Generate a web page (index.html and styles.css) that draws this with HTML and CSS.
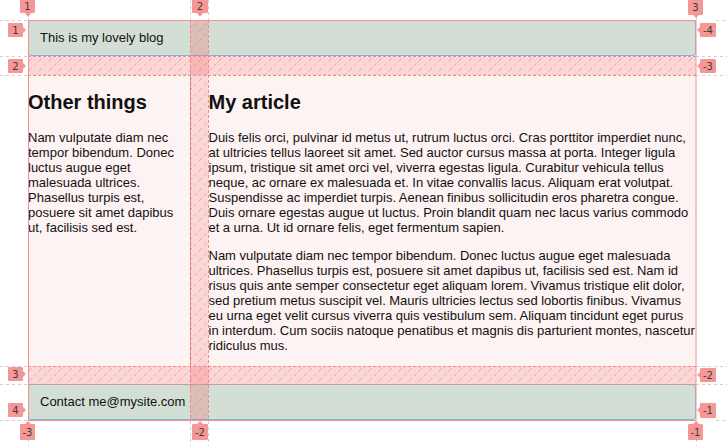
FILE: index.html
```html
<!DOCTYPE html>
<html lang="en">
<head>
<meta charset="utf-8">
<title>Grid layout</title>
<link rel="stylesheet" href="styles.css">
</head>
<body>
<div class="stage">
  <div class="wrapper">
    <header class="site-header">This is my lovely blog</header>
    <aside class="sidebar">
      <h2>Other things</h2>
      <p>Nam vulputate diam nec tempor bibendum. Donec luctus augue eget malesuada ultrices. Phasellus turpis est, posuere sit amet dapibus ut, facilisis sed est.</p>
    </aside>
    <article class="content">
      <h2>My article</h2>
      <p>Duis felis orci, pulvinar id metus ut, rutrum luctus orci. Cras porttitor imperdiet nunc, at ultricies tellus laoreet sit amet. Sed auctor cursus massa at porta. Integer ligula ipsum, tristique sit amet orci vel, viverra egestas ligula. Curabitur vehicula tellus neque, ac ornare ex malesuada et. In vitae convallis lacus. Aliquam erat volutpat. Suspendisse ac imperdiet turpis. Aenean finibus sollicitudin eros pharetra congue. Duis ornare egestas augue ut luctus. Proin blandit quam nec lacus varius commodo et a urna. Ut id ornare felis, eget fermentum sapien.</p>
      <p>Nam vulputate diam nec tempor bibendum. Donec luctus augue eget malesuada ultrices. Phasellus turpis est, posuere sit amet dapibus ut, facilisis sed est. Nam id risus quis ante semper consectetur eget aliquam lorem. Vivamus tristique elit dolor, sed pretium metus suscipit vel. Mauris ultricies lectus sed lobortis finibus. Vivamus eu urna eget velit cursus viverra quis vestibulum sem. Aliquam tincidunt eget purus in interdum. Cum sociis natoque penatibus et magnis dis parturient montes, nascetur ridiculus mus.</p>
    </article>
    <footer class="site-footer">Contact me@mysite.com</footer>
  </div>
</div>

<svg class="grid-overlay" width="727" height="446" viewBox="0 0 727 446" xmlns="http://www.w3.org/2000/svg">
  <defs>
    <pattern id="hatch" patternUnits="userSpaceOnUse" width="10" height="10">
      <line x1="0" y1="10" x2="10" y2="0" stroke="#ee8a8a" stroke-width="1" stroke-dasharray="3 3" opacity="0.7"/>
    </pattern>
  </defs>

  <!-- extension lines -->
  <g stroke="#cfcfcf" stroke-width="1" stroke-dasharray="3 3" fill="none">
    <line x1="0" y1="20.5" x2="28" y2="20.5"/>
    <line x1="0" y1="56.5" x2="28" y2="56.5"/>
    <line x1="0" y1="75.5" x2="28" y2="75.5"/>
    <line x1="0" y1="366.5" x2="28" y2="366.5"/>
    <line x1="0" y1="384.5" x2="28" y2="384.5"/>
    <line x1="0" y1="420.5" x2="28" y2="420.5"/>
    <line x1="716" y1="20.5" x2="727" y2="20.5"/>
    <line x1="696" y1="56.5" x2="727" y2="56.5"/>
    <line x1="696" y1="75.5" x2="727" y2="75.5"/>
    <line x1="696" y1="366.5" x2="727" y2="366.5"/>
    <line x1="696" y1="384.5" x2="727" y2="384.5"/>
    <line x1="716" y1="420.5" x2="727" y2="420.5"/>
    <line x1="28.5" y1="0" x2="28.5" y2="20"/>
    <line x1="190.5" y1="0" x2="190.5" y2="20"/>
    <line x1="208.5" y1="0" x2="208.5" y2="20"/>
    <line x1="696.5" y1="0" x2="696.5" y2="20"/>
    <line x1="28.5" y1="421" x2="28.5" y2="446"/>
    <line x1="190.5" y1="421" x2="190.5" y2="446"/>
    <line x1="208.5" y1="421" x2="208.5" y2="446"/>
    <line x1="696.5" y1="421" x2="696.5" y2="446"/>
  </g>

  <!-- gaps -->
  <g fill="rgba(242,105,105,0.27)">
    <rect x="28" y="56.5" width="668" height="18.5"/>
    <rect x="28" y="366" width="668" height="18"/>
    <rect x="190.5" y="20" width="18" height="400.5"/>
  </g>
  <g fill="url(#hatch)">
    <rect x="28" y="56.5" width="668" height="18.5"/>
    <rect x="28" y="366" width="668" height="18"/>
    <rect x="190.5" y="20" width="18" height="400.5"/>
  </g>
  <g stroke="#f08c8c" stroke-width="1" stroke-dasharray="3 2" fill="none">
    <line x1="28" y1="56.5" x2="696" y2="56.5"/>
    <line x1="28" y1="75.5" x2="696" y2="75.5"/>
    <line x1="28" y1="366.5" x2="696" y2="366.5"/>
    <line x1="28" y1="384.5" x2="696" y2="384.5"/>
    <line x1="190.5" y1="20" x2="190.5" y2="420"/>
    <line x1="208.5" y1="20" x2="208.5" y2="420"/>
  </g>
  <rect x="28.5" y="20.5" width="667.5" height="400" fill="none" stroke="#f39191" stroke-width="1"/>

  <!-- badges -->
  <g fill="#f59797">
    <rect x="20" y="-3" width="15" height="16" rx="1"/>
    <polygon points="25,13 31,13 28,17"/>
    <rect x="192" y="-3" width="16" height="16" rx="1"/>
    <polygon points="197,13 203,13 200,17"/>
    <rect x="688" y="-1" width="15" height="16" rx="1"/>
    <polygon points="693,15 699,15 696,18"/>

    <rect x="8" y="23" width="15" height="14" rx="1"/>
    <polygon points="23,27 23,33 26,30"/>
    <rect x="8" y="59" width="15" height="14" rx="1"/>
    <polygon points="23,63 23,69 26,66"/>
    <rect x="8" y="367" width="15" height="14" rx="1"/>
    <polygon points="23,371 23,377 26,374"/>
    <rect x="8" y="403" width="15" height="14" rx="1"/>
    <polygon points="23,407 23,413 26,410"/>

    <rect x="700" y="23" width="16" height="14" rx="1"/>
    <polygon points="700,27 700,33 697,30"/>
    <rect x="700" y="59" width="16" height="14" rx="1"/>
    <polygon points="700,63 700,69 697,66"/>
    <rect x="700" y="368" width="16" height="14" rx="1"/>
    <polygon points="700,372 700,378 697,375"/>
    <rect x="700" y="403" width="16" height="15" rx="1"/>
    <polygon points="700,407 700,413 697,410"/>

    <rect x="20" y="424" width="15" height="16" rx="1"/>
    <polygon points="25,424 31,424 28,421"/>
    <rect x="192" y="424" width="16" height="16" rx="1"/>
    <polygon points="197,424 203,424 200,421"/>
    <rect x="688" y="424" width="15" height="16" rx="1"/>
    <polygon points="693,424 699,424 696,421"/>
  </g>
  <g class="badge-text" text-anchor="middle">
    <text x="27.5" y="10">1</text>
    <text x="200" y="10">2</text>
    <text x="695.5" y="11">3</text>
    <text x="15.5" y="34">1</text>
    <text x="15.5" y="70">2</text>
    <text x="15.5" y="378">3</text>
    <text x="15.5" y="414">4</text>
    <text x="708" y="34">-4</text>
    <text x="708" y="70">-3</text>
    <text x="708" y="379">-2</text>
    <text x="708" y="414">-1</text>
    <text x="27.5" y="436">-3</text>
    <text x="200" y="436">-2</text>
    <text x="695.5" y="436">-1</text>
  </g>
</svg>
</body>
</html>
```

FILE: styles.css
```css
html, body {
  margin: 0;
  padding: 0;
  background: #ffffff;
}

body {
  font-family: "Liberation Sans", Arial, sans-serif;
  font-size: 13px;
  color: #111;
  width: 727px;
  height: 446px;
  overflow: hidden;
  position: relative;
}

.stage {
  padding: 20px 0 0 28px;
}

.wrapper {
  width: 668px;
  display: grid;
  grid-template-columns: 1fr 3fr;
  grid-template-rows: auto auto auto;
  gap: 18px;
}

.site-header,
.site-footer {
  grid-column: 1 / -1;
  background: #d3dfd4;
  border: 1px solid #7cb6de;
  border-radius: 3px;
  padding: 10px 11px;
  line-height: 14px;
}

.sidebar {
  background: #fdf3f2;
  border-right: 1px solid #8f8f8f;
}

.content {
  background: #fdf3f2;
}

.sidebar h2,
.content h2 {
  font-size: 20px;
  margin: 16.6px 0;
}

.sidebar p,
.content p {
  margin: 13px 0;
}

.content p {
  word-spacing: -0.12px;
}

.grid-overlay {
  position: absolute;
  left: 0;
  top: 0;
  pointer-events: none;
}

.badge-text {
  font-family: "DejaVu Sans", sans-serif;
  font-size: 10px;
  fill: #3c3c3c;
}
```
